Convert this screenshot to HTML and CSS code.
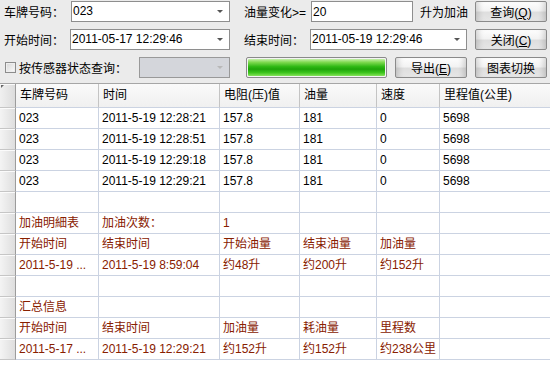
FILE: index.html
```html
<!DOCTYPE html>
<html lang="zh-CN">
<head>
    <meta charset="UTF-8">
    <meta name="viewport" content="width=device-width, initial-scale=1.0">
    <title>油量查询</title>
    <link rel="stylesheet" href="styles.css">
</head>
<body>
<section class="panel">
    <label class="lbl">车牌号码：</label>
    <div class="combo first"><span>023</span><i class="arrow"></i></div>
    <label class="lbl">油量变化&gt;=</label>
    <div class="field-line">
        <input class="txt" type="text" value="20">
        <span class="unit">升为加油</span>
    </div>
    <button class="btn">查询(<u>Q</u>)</button>

    <label class="lbl">开始时间：</label>
    <div class="combo"><span>2011-05-17 12:29:46</span><i class="arrow"></i></div>
    <label class="lbl">结束时间：</label>
    <div class="combo end"><span>2011-05-19 12:29:46</span><i class="arrow"></i></div>
    <button class="btn">关闭(<u>C</u>)</button>

    <div class="check-line">
        <span class="box"></span>
        <span class="check-text">按传感器状态查询：</span>
        <div class="combo disabled"><span></span><i class="arrow"></i></div>
    </div>
    <div class="progress-line">
        <div class="progress"><div class="bar"></div></div>
        <button class="btn">导出(<u>E</u>)</button>
    </div>
    <button class="btn">图表切换</button>
</section>

<section class="grid">
    <header class="row">
        <div class="rh corner"></div>
        <div>车牌号码</div>
        <div>时间</div>
        <div>电阻(压)值</div>
        <div>油量</div>
        <div>速度</div>
        <div>里程值(公里)</div>
    </header>
    <div class="row">
        <div class="rh"></div><div>023</div><div>2011-5-19 12:28:21</div><div>157.8</div><div>181</div><div>0</div><div>5698</div>
    </div>
    <div class="row">
        <div class="rh"></div><div>023</div><div>2011-5-19 12:28:51</div><div>157.8</div><div>181</div><div>0</div><div>5698</div>
    </div>
    <div class="row">
        <div class="rh"></div><div>023</div><div>2011-5-19 12:29:18</div><div>157.8</div><div>181</div><div>0</div><div>5698</div>
    </div>
    <div class="row">
        <div class="rh"></div><div>023</div><div>2011-5-19 12:29:21</div><div>157.8</div><div>181</div><div>0</div><div>5698</div>
    </div>
    <div class="row">
        <div class="rh"></div><div></div><div></div><div></div><div></div><div></div><div></div>
    </div>
    <div class="row red">
        <div class="rh"></div><div>加油明細表</div><div>加油次数：</div><div>1</div><div></div><div></div><div></div>
    </div>
    <div class="row red">
        <div class="rh"></div><div>开始时间</div><div>结束时间</div><div>开始油量</div><div>结束油量</div><div>加油量</div><div></div>
    </div>
    <div class="row red">
        <div class="rh"></div><div>2011-5-19 ...</div><div>2011-5-19 8:59:04</div><div>约48升</div><div>约200升</div><div>约152升</div><div></div>
    </div>
    <div class="row">
        <div class="rh"></div><div></div><div></div><div></div><div></div><div></div><div></div>
    </div>
    <div class="row red">
        <div class="rh"></div><div>汇总信息</div><div></div><div></div><div></div><div></div><div></div>
    </div>
    <div class="row red">
        <div class="rh"></div><div>开始时间</div><div>结束时间</div><div>加油量</div><div>耗油量</div><div>里程数</div><div></div>
    </div>
    <div class="row red">
        <div class="rh"></div><div>2011-5-17 ...</div><div>2011-5-19 12:29:21</div><div>约152升</div><div>约152升</div><div>约238公里</div><div></div>
    </div>
</section>
</body>
</html>
```

FILE: styles.css
```css
* {
    margin: 0; padding: 0; box-sizing: border-box;
}

body {
    font-family: "Liberation Sans", "Noto Sans CJK SC", sans-serif;
    font-size: 12px;
    color: #000;
    background: #fff;
    width: 550px;
    height: 370px;
    overflow: hidden;
}

/* top query panel */
.panel {
    height: 84px;
    padding: 1px 0 0 4px;
    background: #ebebeb;
    border-bottom: 1px solid #a6a6a6;
    display: grid;
    grid-template-columns: 66px 174px 66px 165px 72px;
    grid-auto-rows: 21px;
    row-gap: 7px;
    align-items: center;
}

.lbl {
    white-space: nowrap;
}

.combo {
    position: relative;
    width: 160px;
    height: 21px;
    background: #fff;
    border: 1px solid #8e8e8e;
    padding-left: 1px;
    line-height: 19px;
    white-space: nowrap;
}

.combo.first {
    margin-left: 1px;
    width: 159px;
}

.combo.end {
    width: 157px;
}

.arrow {
    position: absolute;
    right: 6px;
    top: 8px;
    border-left: 3px solid transparent;
    border-right: 3px solid transparent;
    border-top: 3px solid #555;
}

.combo.disabled {
    width: 91px;
    margin-left: auto;
    margin-right: 14px;
    background: #d4d6db;
    border-color: #999;
}

.combo.disabled .arrow {
    border-top-color: #b8b8b8;
}

.field-line {
    display: flex;
    align-items: center;
    gap: 7px;
    padding-left: 1px;
}

.txt {
    width: 102px;
    height: 21px;
    border: 1px solid #8e8e8e;
    font: inherit;
    padding-left: 1px;
    outline: none;
}

.btn {
    width: 72px;
    height: 21px;
    font: inherit;
    color: #000;
    border: 1px solid #8a8a8a;
    border-radius: 2px;
    background: linear-gradient(#fdfdfd 0%, #f3f3f3 45%, #dedede 55%, #e6e6e6 100%);
    box-shadow: inset 7px 0 6px -5px rgba(0, 0, 0, 0.18), inset -7px 0 6px -5px rgba(0, 0, 0, 0.18);
}

.btn u {
    text-decoration: underline;
}

.check-line {
    grid-column: span 2;
    display: flex;
    align-items: center;
}

.box {
    width: 11px;
    height: 11px;
    margin: 0 3px 0 1px;
    border: 1px solid #8c8c8c;
    background: linear-gradient(135deg, #d6d6d6, #fbfbfb);
    box-shadow: inset 0 0 0 1px #eee;
}

.check-text {
    white-space: nowrap;
}

.progress-line {
    grid-column: span 2;
    display: flex;
    align-items: center;
    gap: 8px;
    padding-left: 2px;
}

.progress {
    width: 141px;
    height: 21px;
    border: 1px solid #8a8a8a;
    border-radius: 2px;
    background: #f4f4f4;
    padding: 1px;
}

.bar {
    height: 100%;
    border-radius: 1px;
    background: linear-gradient(#c4f0a8 0%, #7cd84e 20%, #2eb814 45%, #1ea40a 60%, #3cc41c 80%, #86e45a 100%);
}

/* data grid */
.grid {
    display: grid;
    grid-template-columns: 16px 83px 121px 80px 77px 63px 1fr;
    background: #fff;
}

.row {
    display: contents;
}

.row > div {
    height: 21px;
    padding: 0 3px;
    line-height: 20px;
    white-space: nowrap;
    overflow: hidden;
    border-right: 1px solid #cbd3e2;
    border-bottom: 1px solid #cbd3e2;
}

.row > div:last-child {
    border-right: none;
}

.row > .rh {
    padding: 0;
    background: linear-gradient(to right, #f4f4f4, #dedede);
    border-right: 1px solid #9c9c9c;
    border-bottom: 1px solid #c6c6c6;
    box-shadow: inset 0 1px #fbfbfb;
}

header.row > div {
    height: 24px;
    line-height: 23px;
    padding-left: 4px;
    background: linear-gradient(#fafafa, #f0f0f0);
    border-right-color: #c4c4c4;
}

header.row > .corner {
    position: relative;
    background: linear-gradient(to right, #f0f0f0, #dcdcdc);
    border-right-color: #9c9c9c;
}

.corner::before {
    content: "";
    position: absolute;
    left: 1px;
    top: 1px;
    border-top: 3px solid #666;
    border-right: 3px solid transparent;
}

.row.red > div {
    color: #882000;
}
```
